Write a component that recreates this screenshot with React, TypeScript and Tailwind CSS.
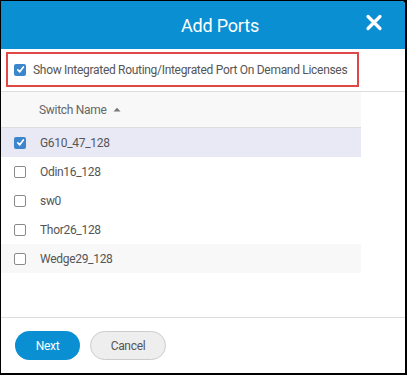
import React from "react";

const rows = [
  { name: "G610_47_128", checked: true, shade: false },
  { name: "Odin16_128", checked: false, shade: false },
  { name: "sw0", checked: false, shade: false },
  { name: "Thor26_128", checked: false, shade: false },
  { name: "Wedge29_128", checked: false, shade: true },
];

function Box({ checked }: { checked: boolean }) {
  if (checked) {
    return (
      <span className="flex h-[12px] w-[12px] shrink-0 items-center justify-center rounded-[2px] bg-[#3b86cc]">
        <svg width="9" height="9" viewBox="0 0 10 10">
          <path d="M2 5.4 L4.2 7.6 L8.2 2.2" fill="none" stroke="white" strokeWidth="1.9" strokeLinecap="round" strokeLinejoin="round" />
        </svg>
      </span>
    );
  }
  return <span className="block h-[12px] w-[12px] shrink-0 rounded-[2px] border border-[#8a8a8a] bg-white" />;
}

export default function App() {
  return (
    <div className="h-[375px] w-[407px] bg-black pb-[2px] pl-[1px] pr-[2px] pt-[1px]" style={{ fontFamily: "Roboto, 'Liberation Sans', sans-serif" }}>
      <div className="flex h-full w-full flex-col overflow-hidden rounded-tr-[4px] bg-white">
        <div className="relative flex h-[48px] shrink-0 items-center justify-center bg-[#0a8fd3]">
          <span className="ml-[34px] text-[18px] tracking-[-0.2px] text-white">Add Ports</span>
          <svg className="absolute left-[364px] top-[13px]" width="18" height="17" viewBox="0 0 18 17">
            <path d="M3 2.5 L15 14.5 M15 2.5 L3 14.5" stroke="white" strokeWidth="3.2" strokeLinecap="round" />
          </svg>
        </div>

        <div className="px-[5px] pt-[3px]">
          <div className="flex h-[35px] w-[353px] items-center gap-[7px] border-2 border-[#e04848] pl-[6px]">
            <Box checked />
            <span className="whitespace-nowrap text-[12px] tracking-[-0.3px] text-[#555]">Show Integrated Routing/Integrated Port On Demand Licenses</span>
          </div>
        </div>

        <div className="mt-[4px] border-t border-[#dddddd]">
          <div className="w-[360px]">
            <div className="flex h-[36px] items-center border-b border-[#dddddd] bg-[#f8f8f8] pl-[38px] text-[12px] tracking-[-0.3px] text-[#666]">
              <span>Switch Name</span>
              <svg className="ml-[6px]" width="8" height="5" viewBox="0 0 8 5">
                <path d="M0.5 4.5 L4 0.8 L7.5 4.5 Z" fill="#777" />
              </svg>
            </div>
            {rows.map((r) => (
              <div
                key={r.name}
                className={
                  "flex h-[29px] items-center gap-[14px] pl-[13px] text-[12px] tracking-[-0.3px] text-[#555] " +
                  (r.checked ? "bg-[#e9e9f6]" : r.shade ? "bg-[#f8f8f8]" : "bg-white")
                }
              >
                <Box checked={r.checked} />
                <span>{r.name}</span>
              </div>
            ))}
          </div>
        </div>

        <div className="flex-1" />

        <div className="flex h-[56px] shrink-0 gap-[10px] border-t border-[#dddddd] pl-[14px] pt-[13px]">
          <button className="h-[29px] w-[65px] rounded-full bg-[#0a8fd3] text-[12px] tracking-[-0.3px] text-white">Next</button>
          <button className="h-[29px] w-[76px] rounded-full border border-[#cccccc] bg-[#eeeeee] text-[12px] tracking-[-0.3px] text-[#555]">Cancel</button>
        </div>
      </div>
    </div>
  );
}
